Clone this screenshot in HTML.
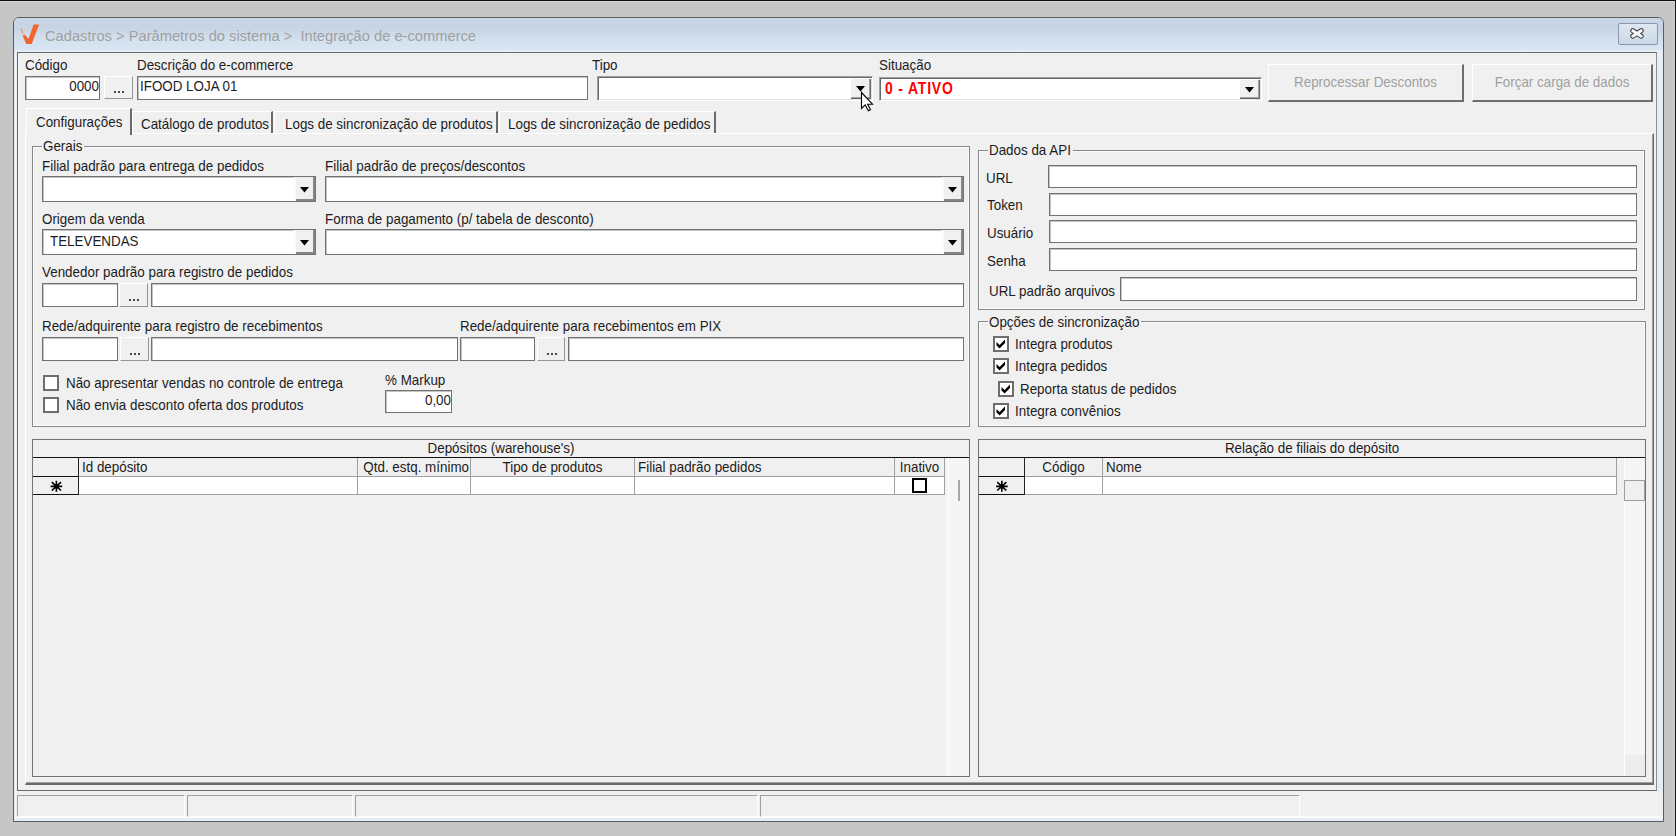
<!DOCTYPE html>
<html><head><meta charset="utf-8">
<style>
*{box-sizing:border-box;margin:0;padding:0}
html,body{width:1676px;height:836px;overflow:hidden}
body{background:#c6c6c6;position:relative;font-family:"Liberation Sans",sans-serif;font-size:13.4px;color:#1c1c1c}
.a{position:absolute}
.t{position:absolute;white-space:nowrap;line-height:15px;font-size:13.4px;transform:scaleY(1.12);transform-origin:0 12px}
.inp{position:absolute;background:#fff;border:1px solid #727272;box-shadow:inset 1px 1px 0 #c4c4c4}
.btn{position:absolute;background:#f0f0f0;border-top:1px solid #fff;border-left:1px solid #fff;border-right:1px solid #959595;border-bottom:1px solid #959595}
.cmb{position:absolute;background:#fff;border:1px solid #727272;box-shadow:inset 1px 1px 0 #c4c4c4}
.cmb .dd{position:absolute;right:0;top:0;bottom:0;width:21px;background:#f0f0f0;border-left:2px solid #fcfcfc;box-shadow:inset -2px -2px 0 #858585}
.cmb .dd:after{content:"";position:absolute;left:4px;top:10px;width:9px;height:5.5px;background:#000;clip-path:polygon(0 0,100% 0,50% 100%)}
.c3{position:absolute;background:#fff;border-top:1px solid #a0a0a0;border-left:1px solid #a0a0a0;border-bottom:1px solid #fff;border-right:1px solid #fff;box-shadow:inset 1px 1px 0 #696969,inset -1px -1px 0 #e3e3e3}
.c3 .dd{position:absolute;right:1px;top:1px;bottom:1px;width:21px;background:#f0f0f0;box-shadow:inset 1px 1px 0 #fff,inset -1px -1px 0 #696969,inset -2px -2px 0 #a0a0a0}
.c3 .dd:after{content:"";position:absolute;left:6px;top:8px;width:9px;height:5.5px;background:#000;clip-path:polygon(0 0,100% 0,50% 100%)}
.grp{position:absolute;border:1px solid #878787;box-shadow:inset 0 0 0 1px #fcfcfc}
.glbl{position:absolute;background:#f0f0f0;padding:0 2px 0 1px;white-space:nowrap;line-height:15px;transform:scaleY(1.12);transform-origin:0 12px}
.cb{position:absolute;width:16px;height:16px;background:#fff;border:2px solid #6e6e6e}
.cb.k:after{content:"";position:absolute;left:-2px;top:-2px;width:16px;height:16px;background:#000;clip-path:polygon(3.5px 6px,6.6px 9px,12px 3.5px,12px 7px,6.6px 12.4px,3.5px 9.4px)}
.dots{position:absolute;left:0;right:0;text-align:center;line-height:15px}
.d3{position:absolute;left:9px;bottom:5px;width:10px;height:2px;background:repeating-linear-gradient(90deg,#4a4a4a 0 2px,transparent 2px 4px)}
</style></head><body>
<!-- top black line -->
<div class="a" style="left:0;top:0;width:1676px;height:1px;background:#111"></div>
<div class="a" style="left:0;top:1px;width:1676px;height:1px;background:#d6d6d6"></div>
<div class="a" style="left:1674px;top:1px;width:1px;height:835px;background:#d2d2d2"></div>
<div class="a" style="left:1675px;top:0;width:1px;height:836px;background:#111"></div>

<!-- window -->
<div class="a" style="left:13px;top:17px;width:1651px;height:805px;border:1px solid #5c5c5c;border-radius:6px 6px 0 0;background:#e6edf6;overflow:hidden">
  <div class="a" style="left:0;top:0;width:100%;height:34px;background:linear-gradient(#c8d6e5,#c6d4e3 30%,#d2e0ee 60%,#d8e5f2 90%,#e8eff7)"></div>
  <div class="a" style="left:1px;top:34px;width:1px;height:100%;background:#f2f6fa"></div>
</div>
<!-- title icon -->
<svg class="a" style="left:18px;top:22px" width="24" height="24" viewBox="18 22 24 24">
  <path d="M20.1 28.6 L21.7 28.4 L23.6 33.2 L22.4 33.8 Z" fill="#f39a74"/>
  <path d="M33.7 24.4 L39.1 24.4 L31.7 44 L26.3 44 L22.6 35.8 L24.4 34.4 L28.6 38.8 Z" fill="#f2652f"/>
</svg>
<div class="a" style="left:45px;top:28px;font-size:14.7px;line-height:17px;color:#a0a0a0;white-space:nowrap">Cadastros &gt; Parâmetros do sistema &gt;&nbsp; Integração de e-commerce</div>
<!-- close button -->
<div class="a" style="left:1618px;top:23px;width:40px;height:22px;border:1px solid #8896b0;border-radius:2px;background:linear-gradient(#dfe8f2,#cbd8e6)"></div>
<svg class="a" style="left:1628px;top:26px" width="20" height="16" viewBox="0 0 20 16">
  <path d="M4.8 4.7 L13.2 10.2 M13.2 4.7 L4.8 10.2" stroke="#404040" stroke-width="5" stroke-linecap="round"/>
  <path d="M4.8 4.7 L13.2 10.2 M13.2 4.7 L4.8 10.2" stroke="#f8f8f8" stroke-width="3" stroke-linecap="round"/>
</svg>

<!-- client panel -->
<div class="a" style="left:17px;top:52px;width:1640px;height:739px;background:#f0f0f0;border:1px solid #6a6a6a;border-right-color:#8c8c8c"></div>

<!-- status bar -->
<div class="a" style="left:16px;top:791px;width:1647px;height:25px;background:#f0f0f0"></div>
<div class="a" style="left:16px;top:816px;width:1647px;height:2px;background:#fbfcfd"></div>
<div class="a" style="left:17px;top:795px;width:168px;height:22px;border-top:1px solid #a0a0a0;border-left:1px solid #a0a0a0;border-bottom:1px solid #fff;border-right:1px solid #fff"></div>
<div class="a" style="left:187px;top:795px;width:166px;height:22px;border-top:1px solid #a0a0a0;border-left:1px solid #a0a0a0;border-bottom:1px solid #fff;border-right:1px solid #fff"></div>
<div class="a" style="left:355px;top:795px;width:403px;height:22px;border-top:1px solid #a0a0a0;border-left:1px solid #a0a0a0;border-bottom:1px solid #fff;border-right:1px solid #fff"></div>
<div class="a" style="left:760px;top:795px;width:540px;height:22px;border-top:1px solid #a0a0a0;border-left:1px solid #a0a0a0;border-bottom:1px solid #fff;border-right:1px solid #fff"></div>

<!-- HEADER FIELDS -->
<div class="t" style="left:25px;top:58px">Código</div>
<div class="t" style="left:137px;top:58px">Descrição do e-commerce</div>
<div class="t" style="left:592px;top:58px">Tipo</div>
<div class="t" style="left:879px;top:58px">Situação</div>

<div class="inp" style="left:25px;top:76px;width:75px;height:24px"></div>
<div class="t" style="left:25px;top:79px;width:74px;text-align:right">0000</div>
<div class="btn" style="left:104px;top:76px;width:29px;height:23px"><div class="d3"></div></div>
<div class="inp" style="left:137px;top:76px;width:451px;height:24px"></div>
<div class="t" style="left:140px;top:79px">IFOOD LOJA 01</div>

<div class="c3" style="left:597px;top:76px;width:276px;height:25px"><div class="dd" style="top:1px"></div></div>
<div class="c3" style="left:879px;top:77px;width:383px;height:24px"><div class="dd"></div></div>
<div class="t" style="left:885px;top:82px;color:#f00;font-weight:bold;font-size:14px;letter-spacing:0.8px">0 - ATIVO</div>

<div class="btn" style="left:1268px;top:64px;width:196px;height:38px;border-right:2px solid #6e6e6e;border-bottom:2px solid #6e6e6e"><div class="dots" style="top:10px;color:#a0a0a0;transform:scaleY(1.09);transform-origin:0 12px">Reprocessar Descontos</div></div>
<div class="btn" style="left:1472px;top:64px;width:181px;height:38px;border-right:2px solid #6e6e6e;border-bottom:2px solid #6e6e6e"><div class="dots" style="top:10px;color:#a0a0a0;transform:scaleY(1.09);transform-origin:0 12px">Forçar carga de dados</div></div>

<!-- TABS -->
<div class="a" style="left:25px;top:133px;width:1629px;height:652px;border-top:1px solid #fff;border-left:1px solid #fff;box-shadow:inset -1px -1px 0 #a0a0a0;border-right:1px solid #6a6a6a;border-bottom:2px solid #6a6a6a"></div>
<div class="a" style="left:26px;top:108px;width:106px;height:27px;background:#f0f0f0;border-top:1px solid #fff;border-left:1px solid #fff;border-right:2px solid #6a6a6a"></div>
<div class="a" style="left:132px;top:111px;width:141px;height:22px;border-top:1px solid #fff;border-left:1px solid #fff;border-right:2px solid #6a6a6a"></div>
<div class="a" style="left:274px;top:111px;width:224px;height:22px;border-top:1px solid #fff;border-left:1px solid #fff;border-right:2px solid #6a6a6a"></div>
<div class="a" style="left:499px;top:111px;width:217px;height:22px;border-top:1px solid #fff;border-left:1px solid #fff;border-right:2px solid #6a6a6a"></div>
<div class="t" style="left:36px;top:115px">Configurações</div>
<div class="t" style="left:141px;top:117px">Catálogo de produtos</div>
<div class="t" style="left:285px;top:117px">Logs de sincronização de produtos</div>
<div class="t" style="left:508px;top:117px">Logs de sincronização de pedidos</div>

<!-- GERAIS -->
<div class="grp" style="left:32px;top:146px;width:938px;height:281px"></div>
<div class="glbl" style="left:42px;top:139px">Gerais</div>
<div class="t" style="left:42px;top:159px">Filial padrão para entrega de pedidos</div>
<div class="t" style="left:325px;top:159px">Filial padrão de preços/descontos</div>
<div class="cmb" style="left:42px;top:176px;width:274px;height:26px"><div class="dd"></div></div>
<div class="cmb" style="left:325px;top:176px;width:639px;height:26px"><div class="dd"></div></div>
<div class="t" style="left:42px;top:212px">Origem da venda</div>
<div class="t" style="left:325px;top:212px">Forma de pagamento (p/ tabela de desconto)</div>
<div class="cmb" style="left:42px;top:229px;width:274px;height:26px"><div class="dd"></div></div>
<div class="t" style="left:50px;top:234px">TELEVENDAS</div>
<div class="cmb" style="left:325px;top:229px;width:639px;height:26px"><div class="dd"></div></div>

<div class="t" style="left:42px;top:265px">Vendedor padrão para registro de pedidos</div>
<div class="inp" style="left:42px;top:283px;width:76px;height:24px"></div>
<div class="btn" style="left:119px;top:283px;width:29px;height:24px"><div class="d3"></div></div>
<div class="inp" style="left:151px;top:283px;width:813px;height:24px"></div>

<div class="t" style="left:42px;top:319px">Rede/adquirente para registro de recebimentos</div>
<div class="t" style="left:460px;top:319px">Rede/adquirente para recebimentos em PIX</div>
<div class="inp" style="left:42px;top:337px;width:76px;height:24px"></div>
<div class="btn" style="left:120px;top:337px;width:29px;height:24px"><div class="d3"></div></div>
<div class="inp" style="left:151px;top:337px;width:307px;height:24px"></div>
<div class="inp" style="left:460px;top:337px;width:75px;height:24px"></div>
<div class="btn" style="left:537px;top:337px;width:28px;height:24px"><div class="d3"></div></div>
<div class="inp" style="left:568px;top:337px;width:396px;height:24px"></div>

<div class="cb" style="left:43px;top:375px"></div>
<div class="t" style="left:66px;top:376px">Não apresentar vendas no controle de entrega</div>
<div class="cb" style="left:43px;top:397px"></div>
<div class="t" style="left:66px;top:398px">Não envia desconto oferta dos produtos</div>
<div class="t" style="left:385px;top:373px">% Markup</div>
<div class="inp" style="left:385px;top:390px;width:67px;height:23px"></div>
<div class="t" style="left:385px;top:393px;width:66px;text-align:right">0,00</div>

<!-- DADOS DA API -->
<div class="grp" style="left:978px;top:150px;width:667px;height:160px"></div>
<div class="glbl" style="left:988px;top:143px">Dados da API</div>
<div class="t" style="left:986px;top:171px">URL</div>
<div class="inp" style="left:1048px;top:165px;width:589px;height:23px"></div>
<div class="t" style="left:987px;top:198px">Token</div>
<div class="inp" style="left:1049px;top:193px;width:588px;height:23px"></div>
<div class="t" style="left:987px;top:226px">Usuário</div>
<div class="inp" style="left:1049px;top:220px;width:588px;height:23px"></div>
<div class="t" style="left:987px;top:254px">Senha</div>
<div class="inp" style="left:1049px;top:248px;width:588px;height:23px"></div>
<div class="t" style="left:989px;top:284px">URL padrão arquivos</div>
<div class="inp" style="left:1120px;top:277px;width:517px;height:24px"></div>

<!-- OPCOES -->
<div class="grp" style="left:978px;top:321px;width:668px;height:106px"></div>
<div class="glbl" style="left:988px;top:315px">Opções de sincronização</div>
<div class="cb k" style="left:993px;top:336px"></div>
<div class="t" style="left:1015px;top:337px">Integra produtos</div>
<div class="cb k" style="left:993px;top:358px"></div>
<div class="t" style="left:1015px;top:359px">Integra pedidos</div>
<div class="cb k" style="left:998px;top:381px"></div>
<div class="t" style="left:1020px;top:382px">Reporta status de pedidos</div>
<div class="cb k" style="left:993px;top:403px"></div>
<div class="t" style="left:1015px;top:404px">Integra convênios</div>

<!-- GRID LEFT -->
<div class="a" style="left:32px;top:439px;width:938px;height:338px;border:1px solid #737373;background:#f0f0f0"></div>
<div class="t" style="left:33px;top:441px;width:936px;text-align:center">Depósitos (warehouse's)</div>
<div class="a" style="left:33px;top:457px;width:936px;height:1px;background:#111"></div>
<!-- scroll area left -->
<div class="a" style="left:945px;top:458px;width:24px;height:318px;background:#f5f5f5"></div>
<div class="a" style="left:948px;top:458px;width:1px;height:318px;background:#fff"></div>
<div class="a" style="left:958px;top:480px;width:2px;height:21px;background:#a8a8a8"></div>
<!-- header row -->
<div class="a" style="left:33px;top:476px;width:46px;height:1px;background:#111"></div>
<div class="a" style="left:33px;top:494px;width:46px;height:1px;background:#111"></div>
<div class="a" style="left:78px;top:458px;width:1px;height:37px;background:#222"></div>
<div class="a" style="left:79px;top:477px;width:865px;height:17px;background:#fff"></div>
<div class="a" style="left:79px;top:476px;width:866px;height:1px;background:#a0a0a0"></div>
<div class="a" style="left:79px;top:494px;width:866px;height:1px;background:#a0a0a0"></div>
<div class="a" style="left:357px;top:458px;width:1px;height:37px;background:#a0a0a0"></div>
<div class="a" style="left:470px;top:458px;width:1px;height:37px;background:#a0a0a0"></div>
<div class="a" style="left:634px;top:458px;width:1px;height:37px;background:#a0a0a0"></div>
<div class="a" style="left:894px;top:458px;width:1px;height:37px;background:#a0a0a0"></div>
<div class="a" style="left:944px;top:458px;width:1px;height:37px;background:#a0a0a0"></div>
<div class="t" style="left:82px;top:460px">Id depósito</div>
<div class="t" style="left:358px;top:460px;width:111px;text-align:right">Qtd. estq. mínimo</div>
<div class="t" style="left:471px;top:460px;width:163px;text-align:center">Tipo de produtos</div>
<div class="t" style="left:638px;top:460px">Filial padrão pedidos</div>
<div class="t" style="left:895px;top:460px;width:49px;text-align:center">Inativo</div>
<div class="a" style="left:912px;top:478px;width:15px;height:15px;border:2.5px solid #000;background:#fff"></div>
<svg class="a" style="left:50px;top:480px" width="13" height="13" viewBox="0 0 13 13"><path d="M6.4 0.8 V11.8 M0.6 6.4 H12.2 M1.8 2.2 L11 10.5 M11 2.2 L1.8 10.5" stroke="#000" stroke-width="1.6"/><circle cx="6.4" cy="6.4" r="2.2" fill="#000"/></svg>

<!-- GRID RIGHT -->
<div class="a" style="left:978px;top:439px;width:668px;height:338px;border:1px solid #737373;background:#f0f0f0"></div>
<div class="t" style="left:979px;top:441px;width:666px;text-align:center">Relação de filiais do depósito</div>
<div class="a" style="left:979px;top:457px;width:666px;height:1px;background:#111"></div>
<div class="a" style="left:1625px;top:458px;width:20px;height:318px;background:#f5f5f5"></div>
<div class="a" style="left:1624px;top:458px;width:1px;height:318px;background:#fff"></div>
<div class="a" style="left:1624px;top:480px;width:21px;height:21px;border:1px solid #a0a0a0;background:#f0f0f0"></div>
<div class="a" style="left:1625px;top:755px;width:20px;height:21px;background:#ededed"></div>
<div class="a" style="left:979px;top:476px;width:45px;height:1px;background:#111"></div>
<div class="a" style="left:979px;top:494px;width:45px;height:1px;background:#111"></div>
<div class="a" style="left:1024px;top:458px;width:1px;height:37px;background:#222"></div>
<div class="a" style="left:1025px;top:477px;width:591px;height:17px;background:#fff"></div>
<div class="a" style="left:1025px;top:476px;width:592px;height:1px;background:#a0a0a0"></div>
<div class="a" style="left:1025px;top:494px;width:592px;height:1px;background:#a0a0a0"></div>
<div class="a" style="left:1102px;top:458px;width:1px;height:37px;background:#a0a0a0"></div>
<div class="a" style="left:1616px;top:458px;width:1px;height:37px;background:#a0a0a0"></div>
<div class="t" style="left:1025px;top:460px;width:77px;text-align:center">Código</div>
<div class="t" style="left:1106px;top:460px">Nome</div>
<svg class="a" style="left:995px;top:480px" width="13" height="13" viewBox="0 0 13 13"><path d="M6.8 0.8 V11.8 M1.1 6.4 H12.7 M2.2 2.2 L11.4 10.5 M11.4 2.2 L2.2 10.5" stroke="#000" stroke-width="1.6"/><circle cx="6.8" cy="6.4" r="2.2" fill="#000"/></svg>

<!-- cursor -->
<svg class="a" style="left:860px;top:91px" width="16" height="22" viewBox="0 0 16 22">
  <path d="M1.5 1.5 L1.5 17.5 L5.2 13.8 L8.3 19.8 L10.5 18.8 L7.7 13.2 L12.5 13.2 Z" fill="#fff" stroke="#000" stroke-width="1.1" stroke-linejoin="miter"/>
</svg>
</body></html>
